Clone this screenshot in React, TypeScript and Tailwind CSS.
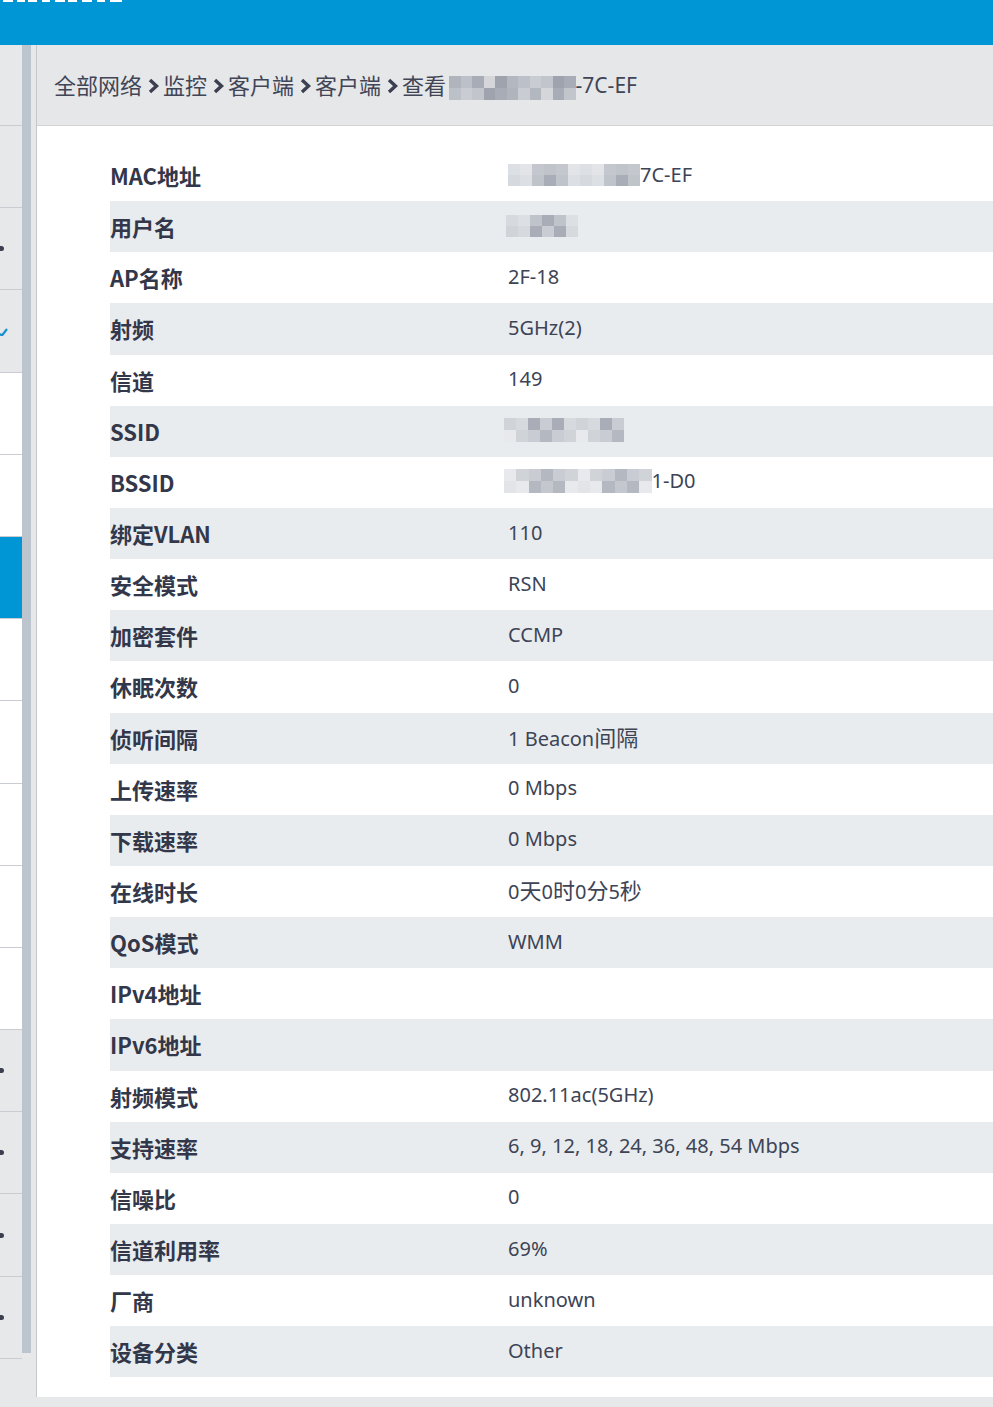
import React from "react";

const palette = [
  "bg-[#c9ccd2]",
  "bg-[#d6d9dd]",
  "bg-[#bfc3ca]",
  "bg-[#e2e4e7]",
  "bg-[#b4b8c1]",
  "bg-[#d0d3d8]",
  "bg-[#a9adb7]",
  "bg-[#dcdfe3]",
  "bg-[#c4c8ce]",
  "bg-[#e8e9ec]",
];

const darkPalette = [
  "bg-[#c2c5cc]",
  "bg-[#b3b7c0]",
  "bg-[#a8acb6]",
  "bg-[#c9ccd2]",
  "bg-[#9ea3ad]",
  "bg-[#bcc0c8]",
  "bg-[#d4d6da]",
  "bg-[#b0b4bd]",
];

function Blur({
  cols,
  rows,
  seed,
  cell = 12,
  h = 12,
  dark = false,
}: {
  cols: number;
  rows: number;
  seed: number;
  cell?: number;
  h?: number;
  dark?: boolean;
}) {
  const pal = dark ? darkPalette : palette;
  const cells: React.ReactNode[] = [];
  for (let r = 0; r < rows; r++) {
    const row: React.ReactNode[] = [];
    for (let c = 0; c < cols; c++) {
      const idx = (seed * 7 + r * 13 + c * 5 + ((c * c + r) % 3)) % pal.length;
      row.push(<div key={c} className={pal[idx]} style={{ width: cell, height: h }} />);
    }
    cells.push(
      <div key={r} className="flex">
        {row}
      </div>
    );
  }
  return <div className="flex flex-col">{cells}</div>;
}

function Chevron() {
  return (
    <svg width="14" height="18" viewBox="0 0 14 18" className="mx-[3.5px] shrink-0">
      <path d="M4 3 L10.5 9 L4 15" fill="none" stroke="#3b3f50" strokeWidth="3.4" strokeLinejoin="miter" strokeLinecap="butt" />
    </svg>
  );
}

function Mixed({ text }: { text: string }) {
  const parts = text.split(/([\u4e00-\u9fff]+)/).filter((p) => p.length > 0);
  return (
    <>
      {parts.map((p, i) =>
        /[\u4e00-\u9fff]/.test(p) ? (
          <span key={i} className="text-[22px]">
            {p}
          </span>
        ) : (
          <span key={i}>{p}</span>
        )
      )}
    </>
  );
}

type Row = { label: string; value: React.ReactNode };

const rows: Row[] = [
  {
    label: "MAC地址",
    value: (
      <span className="flex items-center">
        <Blur cols={11} rows={2} seed={1} cell={12} h={11} />
        <span>7C-EF</span>
      </span>
    ),
  },
  {
    label: "用户名",
    value: (
      <span className="flex -ml-[2px]">
        <Blur cols={6} rows={2} seed={3} cell={12} h={11} />
      </span>
    ),
  },
  { label: "AP名称", value: "2F-18" },
  { label: "射频", value: "5GHz(2)" },
  { label: "信道", value: "149" },
  {
    label: "SSID",
    value: (
      <span className="flex -ml-[4px]">
        <Blur cols={10} rows={2} seed={5} cell={12} h={12} />
      </span>
    ),
  },
  {
    label: "BSSID",
    value: (
      <span className="flex items-center -ml-[4px]">
        <Blur cols={12} rows={2} seed={7} cell={12.3} h={12} />
        <span>1-D0</span>
      </span>
    ),
  },
  { label: "绑定VLAN", value: "110" },
  { label: "安全模式", value: "RSN" },
  { label: "加密套件", value: "CCMP" },
  { label: "休眠次数", value: "0" },
  { label: "侦听间隔", value: "1 Beacon间隔" },
  { label: "上传速率", value: "0 Mbps" },
  { label: "下载速率", value: "0 Mbps" },
  { label: "在线时长", value: "0天0时0分5秒" },
  { label: "QoS模式", value: "WMM" },
  { label: "IPv4地址", value: "" },
  { label: "IPv6地址", value: "" },
  { label: "射频模式", value: "802.11ac(5GHz)" },
  { label: "支持速率", value: "6, 9, 12, 18, 24, 36, 48, 54 Mbps" },
  { label: "信噪比", value: "0" },
  { label: "信道利用率", value: "69%" },
  { label: "厂商", value: "unknown" },
  { label: "设备分类", value: "Other" },
];

type Side = { bg: string; mark?: "dot" | "check" };
const sideItems: Side[] = [
  { bg: "bg-[#e6e8ea]" },
  { bg: "bg-[#e6e8ea]" },
  { bg: "bg-[#e6e8ea]", mark: "dot" },
  { bg: "bg-[#e6e8ea]", mark: "check" },
  { bg: "bg-white" },
  { bg: "bg-white" },
  { bg: "bg-[#0096d6]" },
  { bg: "bg-white" },
  { bg: "bg-white" },
  { bg: "bg-white" },
  { bg: "bg-white" },
  { bg: "bg-white" },
  { bg: "bg-[#e6e8ea]", mark: "dot" },
  { bg: "bg-[#e6e8ea]", mark: "dot" },
  { bg: "bg-[#e6e8ea]", mark: "dot" },
  { bg: "bg-[#e6e8ea]", mark: "dot" },
  { bg: "bg-[#e6e8ea]" },
];

export default function App() {
  const font = { fontFamily: '"Noto Sans", "Noto Sans CJK SC", sans-serif' };
  return (
    <div className="w-[993px] h-[1407px] flex flex-col bg-white overflow-hidden" style={font}>
      {/* header */}
      <div className="h-[45px] bg-[#0096d6] shrink-0 relative">
        <svg width="130" height="3" className="absolute left-0 top-0">
          {[
            [3, 10],
            [17, 8],
            [28, 9],
            [42, 8],
            [55, 10],
            [68, 9],
            [82, 10],
            [97, 8],
            [110, 12],
          ].map(([x, w], i) => (
            <rect key={i} x={x} y={0} width={w} height={2} fill="#ffffff" />
          ))}
        </svg>
      </div>

      {/* middle */}
      <div className="h-[1352px] flex shrink-0">
        {/* sidebar */}
        <div className="w-[22px] flex flex-col shrink-0">
          {sideItems.map((s, i) => (
            <div
              key={i}
              className={`${s.bg} ${i === 0 ? "h-[80px]" : i === 16 ? "flex-1" : "h-[82.2px]"} ${i === 0 ? "" : "border-t border-[#c9cdd1]"} flex items-center shrink-0`}
            >
              {s.mark === "dot" && <div className="w-[4px] h-[5px] rounded-r-full bg-[#3b3f50]" />}
              {s.mark === "check" && (
                <svg width="8" height="10" viewBox="0 0 8 10">
                  <path d="M0 8 L2 9.5 L7 3" fill="none" stroke="#1a8fd0" strokeWidth="2.2" />
                </svg>
              )}
            </div>
          ))}
        </div>
        {/* scrollbar */}
        <div className="w-[9px] flex flex-col shrink-0 bg-[#e6e8ea]">
          <div className="h-[1308px] bg-[#bcc5cd]" />
        </div>
        <div className="w-[5px] bg-[#e6e8ea] shrink-0" />
        <div className="w-px bg-[#c5c7ca] shrink-0" />

        {/* main */}
        <div className="flex-1 flex flex-col min-w-0">
          <div className="h-[81px] bg-[#e6e7e9] border-b border-[#d2d4d6] flex items-center pl-[17px] pt-[1px] text-[22px] text-[#414556] shrink-0 whitespace-nowrap">
            <span>全部网络</span>
            <Chevron />
            <span>监控</span>
            <Chevron />
            <span>客户端</span>
            <Chevron />
            <span>客户端</span>
            <Chevron />
            <span>查看</span>
            <span className="ml-[3px] mt-[4px]">
              <Blur cols={11} rows={2} seed={9} cell={11.5} h={12} dark />
            </span>
            <span className="text-[21px]">-7C-EF</span>
          </div>

          <div className="pt-[24px] pl-[73px]">
            {rows.map((r, i) => (
              <div
                key={r.label}
                className={`h-[51.15px] flex items-center ${i % 2 === 1 ? "bg-[#e9ecee]" : "bg-white"}`}
              >
                <div
                  className="w-[398px] shrink-0 font-bold text-[22px] text-[#33374a]"
                  style={{ fontFamily: '"Noto Sans CJK SC", "Noto Sans", sans-serif' }}
                >
                  {r.label}
                </div>
                <div className="text-[20px] text-[#3d4456] whitespace-nowrap -mt-[2px]">
                  {typeof r.value === "string" ? <Mixed text={r.value} /> : r.value}
                </div>
              </div>
            ))}
          </div>
        </div>
      </div>

      {/* bottom */}
      <div className="flex-1 bg-[#e6e8ea]" />
    </div>
  );
}
